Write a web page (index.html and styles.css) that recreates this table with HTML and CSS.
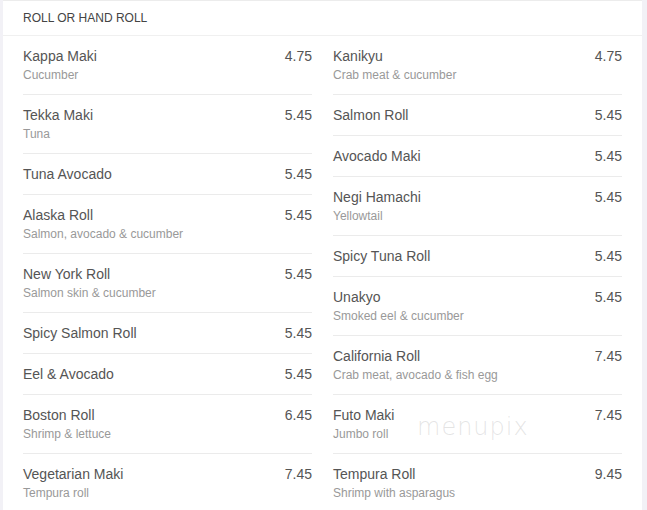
FILE: index.html
```html
<!DOCTYPE html>
<html lang="en">

<head>
    <meta charset="UTF-8">
    <meta name="viewport" content="width=device-width, initial-scale=1.0">
    <title>Roll or Hand Roll</title>
    <link rel="stylesheet" href="styles.css">
</head>

<body>
    <div class="card">
        <div class="card-header">ROLL OR HAND ROLL</div>
        <div class="columns">
            <ul class="menu">
                <li class="item"><div class="row"><span class="name">Kappa Maki</span><span class="price">4.75</span></div><div class="desc">Cucumber</div></li>
                <li class="item"><div class="row"><span class="name">Tekka Maki</span><span class="price">5.45</span></div><div class="desc">Tuna</div></li>
                <li class="item"><div class="row"><span class="name">Tuna Avocado</span><span class="price">5.45</span></div></li>
                <li class="item"><div class="row"><span class="name">Alaska Roll</span><span class="price">5.45</span></div><div class="desc">Salmon, avocado &amp; cucumber</div></li>
                <li class="item"><div class="row"><span class="name">New York Roll</span><span class="price">5.45</span></div><div class="desc">Salmon skin &amp; cucumber</div></li>
                <li class="item"><div class="row"><span class="name">Spicy Salmon Roll</span><span class="price">5.45</span></div></li>
                <li class="item"><div class="row"><span class="name">Eel &amp; Avocado</span><span class="price">5.45</span></div></li>
                <li class="item"><div class="row"><span class="name">Boston Roll</span><span class="price">6.45</span></div><div class="desc">Shrimp &amp; lettuce</div></li>
                <li class="item"><div class="row"><span class="name">Vegetarian Maki</span><span class="price">7.45</span></div><div class="desc">Tempura roll</div></li>
            </ul>
            <ul class="menu">
                <li class="item"><div class="row"><span class="name">Kanikyu</span><span class="price">4.75</span></div><div class="desc">Crab meat &amp; cucumber</div></li>
                <li class="item"><div class="row"><span class="name">Salmon Roll</span><span class="price">5.45</span></div></li>
                <li class="item"><div class="row"><span class="name">Avocado Maki</span><span class="price">5.45</span></div></li>
                <li class="item"><div class="row"><span class="name">Negi Hamachi</span><span class="price">5.45</span></div><div class="desc">Yellowtail</div></li>
                <li class="item"><div class="row"><span class="name">Spicy Tuna Roll</span><span class="price">5.45</span></div></li>
                <li class="item"><div class="row"><span class="name">Unakyo</span><span class="price">5.45</span></div><div class="desc">Smoked eel &amp; cucumber</div></li>
                <li class="item"><div class="row"><span class="name">California Roll</span><span class="price">7.45</span></div><div class="desc">Crab meat, avocado &amp; fish egg</div></li>
                <li class="item"><div class="row"><span class="name">Futo Maki</span><span class="price">7.45</span></div><div class="desc">Jumbo roll</div></li>
                <li class="item"><div class="row"><span class="name">Tempura Roll</span><span class="price">9.45</span></div><div class="desc">Shrimp with asparagus</div></li>
            </ul>
        </div>
        <div class="watermark">menupix</div>
    </div>
</body>

</html>
```

FILE: styles.css
```css
* {
    margin: 0;
    padding: 0;
    box-sizing: border-box;
}

body {
    background-color: #f2f1f6;
    font-family: "Liberation Sans", Arial, sans-serif;
    color: #555;
    height: 510px;
    overflow: hidden;
}

.card {
    position: relative;
    margin-left: 3px;
    width: 639px;
    min-height: 520px;
    background: #fff;
    border-top: 1px solid #ececec;
}

.card-header {
    height: 35px;
    padding: 10px 20px 0;
    font-size: 12px;
    line-height: 14px;
    color: #444;
    border-bottom: 1px solid #f0f0f0;
}

.columns {
    display: grid;
    grid-template-columns: 289px 289px;
    column-gap: 21px;
    padding: 0 20px;
}

.menu {
    list-style: none;
}

.item {
    padding: 10px 0;
    border-bottom: 1px solid #ebebeb;
}

.row {
    display: flex;
    justify-content: space-between;
    font-size: 14px;
    line-height: 20px;
    color: #555;
}

.desc {
    font-size: 12px;
    line-height: 18px;
    color: #999;
}

.watermark {
    position: absolute;
    left: 414px;
    top: 412px;
    font-family: "DejaVu Sans", sans-serif;
    font-size: 24px;
    font-weight: 300;
    letter-spacing: 1px;
    color: rgba(150, 150, 150, 0.25);
}
```
